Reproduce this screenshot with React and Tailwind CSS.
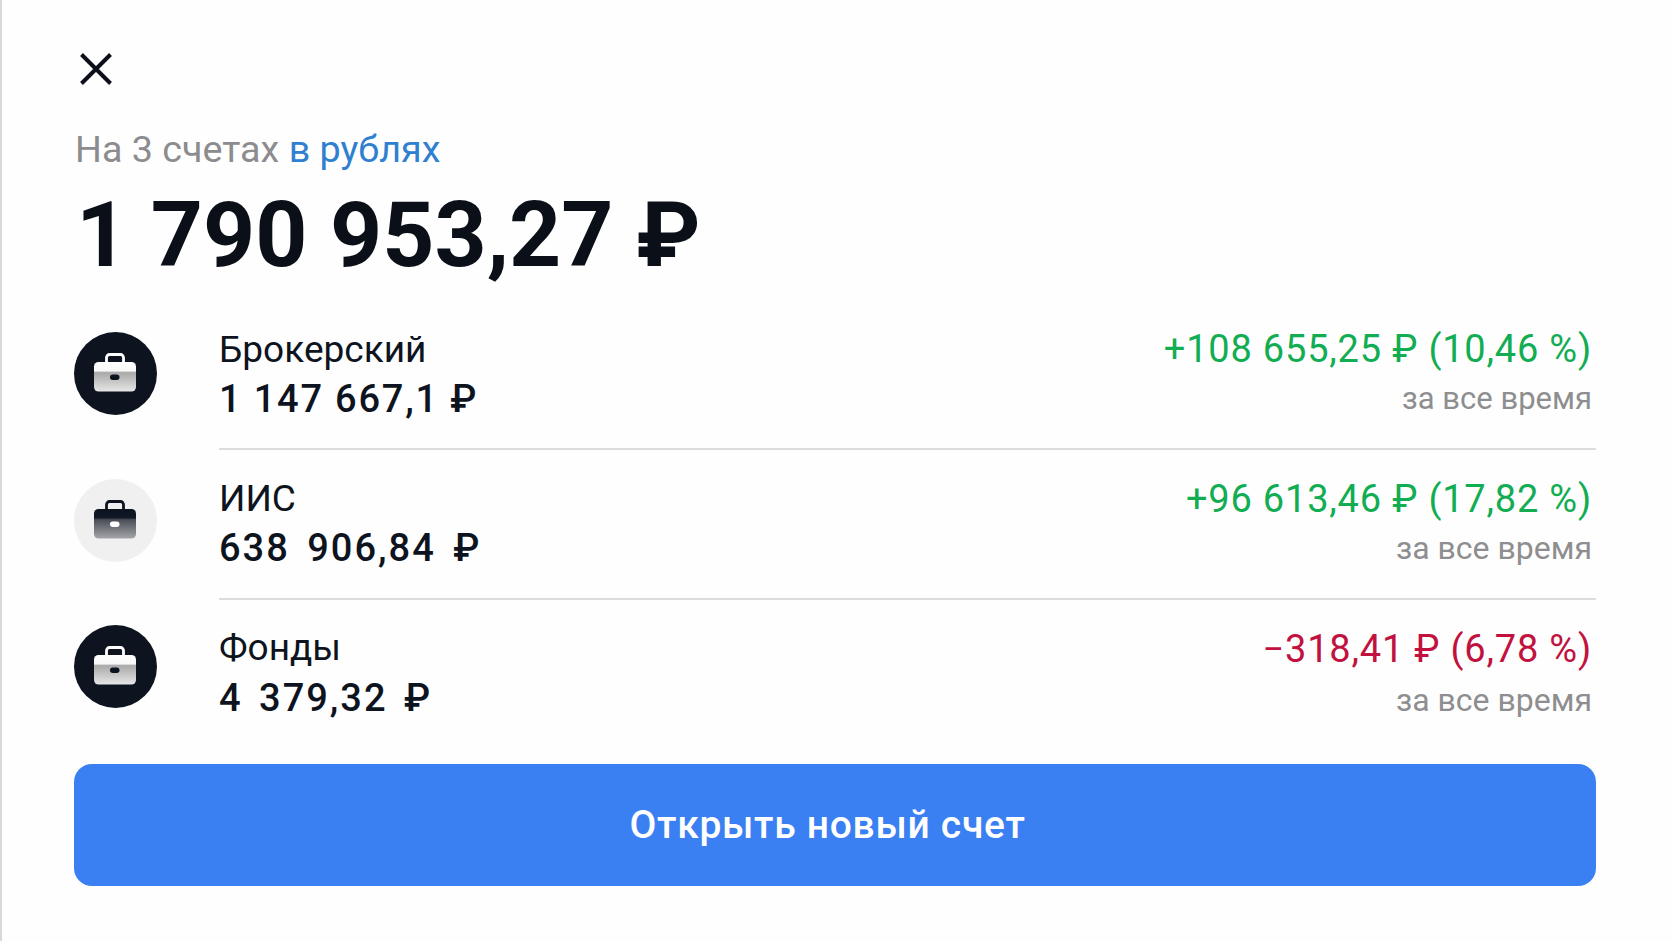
const accounts = [
  { name: 'Брокерский', amount: '1 147 667,1 ₽', change: '+108 655,25 ₽ (10,46 %)', color: 'text-[#12ad53]', dark: true, id: 'a', pad: 'pb-[3px]', top: 'pt-[25px]', amountCls: 'mt-px tracking-[1.8px]', subCls: 'text-[31px]' },
  { name: 'ИИС', amount: '638 906,84 ₽', change: '+96 613,46 ₽ (17,82 %)', color: 'text-[#12ad53]', dark: false, id: 'b', pad: 'pb-[9px]', top: 'pt-[24px]', amountCls: 'mt-px tracking-[2px] [word-spacing:6px]', subCls: 'text-[32px]' },
  { name: 'Фонды', amount: '4 379,32 ₽', change: '−318,41 ₽ (6,78 %)', color: 'text-[#c1123f]', dark: true, id: 'c', pad: 'pb-[17px]', top: 'pt-[23px]', amountCls: 'mt-[2px] tracking-[2px] [word-spacing:5px]', subCls: 'text-[32px] mt-[2px]' },
];

function Briefcase({ dark, id }) {
  const main = dark ? '#ffffff' : '#0d1420';
  const clasp = dark ? '#0d1420' : '#ffffff';
  return (
    <svg width="83" height="83" viewBox="0 0 83 83" fill="none">
      <defs>
        <linearGradient id={id} x1="0" y1="0" x2="0" y2="1">
          {dark ? (
            <>
              <stop offset="0" stopColor="#ffffff" />
              <stop offset="0.3" stopColor="#f8f8f8" />
              <stop offset="0.36" stopColor="#a9a9a9" />
              <stop offset="1" stopColor="#e6e6e6" />
            </>
          ) : (
            <>
              <stop offset="0" stopColor="#0d1420" />
              <stop offset="0.3" stopColor="#111826" />
              <stop offset="0.36" stopColor="#4a4d55" />
              <stop offset="1" stopColor="#a4a6aa" />
            </>
          )}
        </linearGradient>
      </defs>
      <path d="M32.5 30v-4.5a3 3 0 0 1 3-3h11a3 3 0 0 1 3 3V30" stroke={main} strokeWidth="2.8" />
      <rect x="20" y="30" width="42" height="29.5" rx="4.5" fill={`url(#${id})`} />
      <rect x="36" y="42.5" width="9.5" height="5.5" rx="2.7" fill={clasp} />
    </svg>
  );
}

function Row({ item, last }) {
  return (
    <div className="flex h-[150px]">
      <div className={`w-[145px] shrink-0 flex items-center ${item.pad}`}>
        <div className={`w-[83px] h-[83px] rounded-full ${item.dark ? 'bg-[#0d1420]' : 'bg-[#f0f0f0]'}`}>
          <Briefcase dark={item.dark} id={item.id} />
        </div>
      </div>
      <div className={`flex-1 flex justify-between items-start ${last ? '' : 'border-b-2 border-[#dcdcdc]'}`}>
        <div className={item.top}>
          <div className="text-[37px] leading-[49px] text-[#0d1420]">{item.name}</div>
          <div className={`text-[38px] leading-[49px] font-medium text-[#0d1420] ${item.amountCls}`}>{item.amount}</div>
        </div>
        <div className="pt-[25px] pr-[4px] text-right">
          <div className={`text-[38px] leading-[49px] tracking-[0.8px] ${item.color}`}>{item.change}</div>
          <div className={`leading-[49px] text-[#8e8e90] ${item.subCls}`}>за все время</div>
        </div>
      </div>
    </div>
  );
}

export default function App() {
  return (
    <div className="min-h-[941px] bg-[#fefefe] border-l-2 border-[#d8d8d8] pl-[72px] pr-[76px] pt-[53px] font-['Roboto',sans-serif]">
      <svg width="32" height="32" viewBox="0 0 32 32" fill="none" className="ml-[6px]">
        <path d="M1.5 1.5l29 29M30.5 1.5l-29 29" stroke="#0a0f18" strokeWidth="4" />
      </svg>
      <div className="mt-[41px] ml-px text-[37.7px] leading-[46px] text-[#8c8c8e]">
        На 3 счетах <span className="text-[#2f80d0]">в рублях</span>
      </div>
      <div className="mt-[13px] ml-[2px] text-[91px] leading-[100px] font-bold text-[#0a0f18]">1 790 953,27 ₽</div>
      <div className="mt-[15px]">
        {accounts.map((item, i) => (
          <Row key={item.id} item={item} last={i === accounts.length - 1} />
        ))}
      </div>
      <button className="mt-[14px] w-full h-[122px] pr-[15px] rounded-[18px] bg-[#3a80f2] text-white text-[39px] font-medium tracking-[0.7px]">
        Открыть новый счет
      </button>
    </div>
  );
}
